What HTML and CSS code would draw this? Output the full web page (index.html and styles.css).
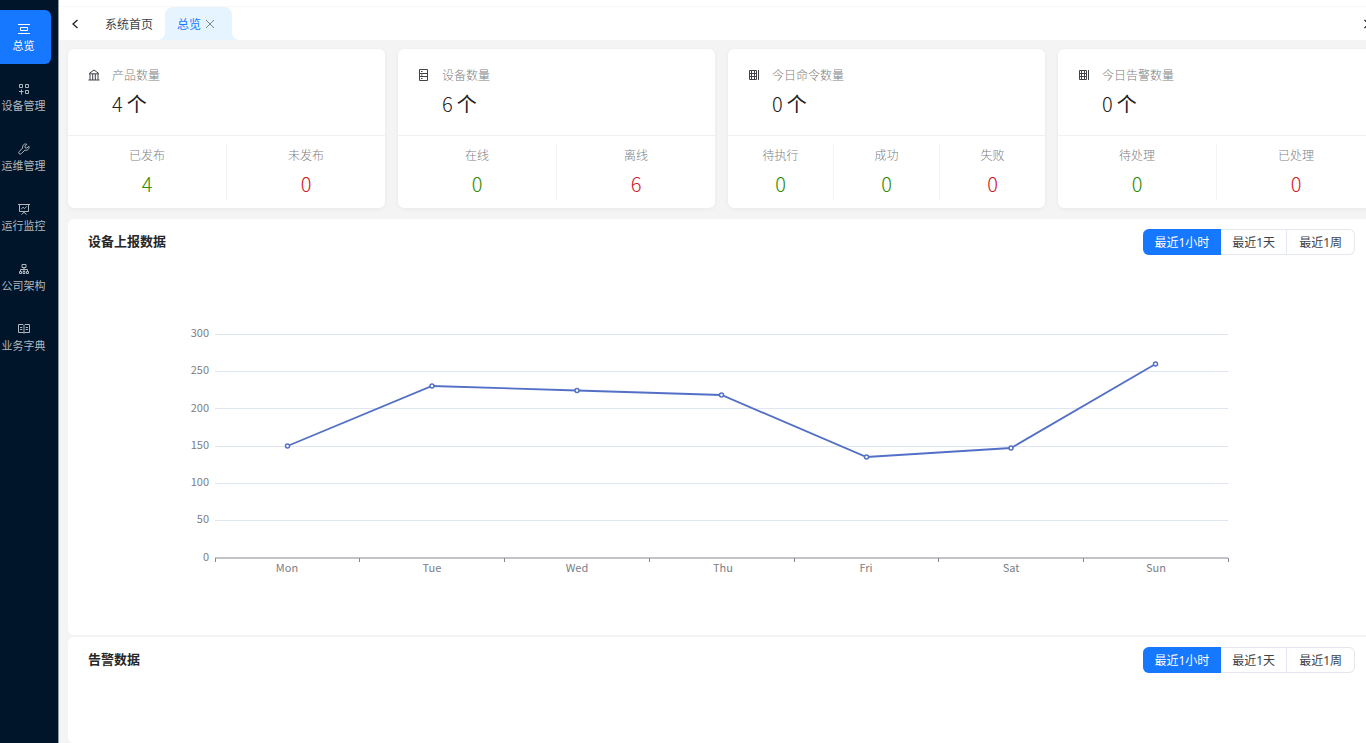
FILE: index.html
```html
<!DOCTYPE html>
<html lang="zh-CN">
<head>
<meta charset="utf-8">
<meta name="viewport" content="width=device-width, initial-scale=1">
<title>总览</title>
<link rel="stylesheet" href="styles.css">
</head>
<body>
<div class="shell">
  <nav class="sidebar">
    <a class="nav-item active" href="#"><svg class="icon" viewBox="0 0 12 12"><path d="M0 1.500h12M0 10.500h12M2.500 4.500h7v3h-7z"/></svg><span>总览</span></a>
    <a class="nav-item" href="#"><svg class="icon" viewBox="0 0 12 12"><path d="M1.500 1.500h3v3h-3zM7.500 1.500h3v3h-3zM7.500 7.500h3v3h-3zM3.500 6.500v5M1 8.500h4.500"/></svg><span>设备管理</span></a>
    <a class="nav-item" href="#"><svg class="icon" viewBox="0 0 12 12"><path d="M10.800 3.200 8.800 5 7.200 4.800 7 3.200 8.800 1.300C7 .4 4.300 1.500 4.600 5L1.200 8.700a1.300 1.300 0 0 0 2 2L6.900 7.200C9.800 7.900 11.700 5.500 10.800 3.200z"/></svg><span>运维管理</span></a>
    <a class="nav-item" href="#"><svg class="icon" viewBox="0 0 12 12"><path d="M0 1.500h12M1.500 1.500v7h9v-7M6 8.300v1M3.500 11.500 6 9.300l2.500 2.200M3.200 6.200l1.800-2 1.500 1.400 2.200-2.300"/></svg><span>运行监控</span></a>
    <a class="nav-item" href="#"><svg class="icon" viewBox="0 0 12 12"><path d="M4 1.500h4v3H4zM6 4.500V8M2.500 8V6.500h7V8M1.500 8.500h2v2h-2zM5 8.500h2v2H5zM8.500 8.500h2v2h-2z"/></svg><span>公司架构</span></a>
    <a class="nav-item" href="#"><svg class="icon" viewBox="0 0 12 12"><path d="M6 2.500v7.500M.5 1.500H5l1 1 1-1h4.500v8H7l-1 .7-1-.7H.5zM2 4.500h2.300M2 6.500h2.300M7.700 4.500H10M7.700 6.500H10"/></svg><span>业务字典</span></a>
  </nav>
  <main class="main">
    <div class="tabbar">
      <button class="arrow" type="button" aria-label="向左"><svg class="icon" viewBox="0 0 12 12"><path d="M8.500 2 4 6l4.500 4"/></svg></button>
      <a class="tab" href="#">系统首页</a>
      <div class="tab current"><a href="#">总览</a><button class="close" type="button" aria-label="关闭"><svg viewBox="0 0 12 12"><path d="m2 2 8 8M10 2l-8 8"/></svg></button></div>
      <button class="arrow next" type="button" aria-label="向右"><svg class="icon" viewBox="0 0 12 12"><path d="m3.500 2 4.500 4-4.500 4"/></svg></button>
    </div>
    <div class="content">
      <div class="cards">
        <section class="card">
          <div class="summary">
            <svg class="icon" viewBox="0 0 12 12"><path d="M.5 11h11M1 4.800h10M1.200 4.500 6 1l4.800 3.500M2 5v6M4.700 5v6M7.300 5v6M10 5v6"/></svg>
            <div><h2>产品数量</h2><p class="value">4<span>个</span></p></div>
          </div>
          <div class="stats">
            <div class="stat"><span>已发布</span><strong class="good">4</strong></div>
            <div class="stat"><span>未发布</span><strong class="bad">0</strong></div>
          </div>
        </section>
        <section class="card">
          <div class="summary">
            <svg class="icon" viewBox="0 0 12 12"><path d="M1.500.5h8v11h-8zM1.500 4.500h8M1.500 7.500h8M3 2.500h1.500M3 6h1.500M3 9.500h1.500"/></svg>
            <div><h2>设备数量</h2><p class="value">6<span>个</span></p></div>
          </div>
          <div class="stats">
            <div class="stat"><span>在线</span><strong class="good">0</strong></div>
            <div class="stat"><span>离线</span><strong class="bad">6</strong></div>
          </div>
        </section>
        <section class="card">
          <div class="summary">
            <svg class="icon" viewBox="0 0 12 12"><path d="M1.500 1.500h7v9h-7zM1.500 4.500h7M1.500 7.500h7M3.500 1.500v9M6.500 1.500v9M10.500 1v10"/></svg>
            <div><h2>今日命令数量</h2><p class="value">0<span>个</span></p></div>
          </div>
          <div class="stats">
            <div class="stat"><span>待执行</span><strong class="good">0</strong></div>
            <div class="stat"><span>成功</span><strong class="good">0</strong></div>
            <div class="stat"><span>失败</span><strong class="bad">0</strong></div>
          </div>
        </section>
        <section class="card">
          <div class="summary">
            <svg class="icon" viewBox="0 0 12 12"><path d="M1.500 1.500h7v9h-7zM1.500 4.500h7M1.500 7.500h7M3.500 1.500v9M6.500 1.500v9M10.500 1v10"/></svg>
            <div><h2>今日告警数量</h2><p class="value">0<span>个</span></p></div>
          </div>
          <div class="stats">
            <div class="stat"><span>待处理</span><strong class="good">0</strong></div>
            <div class="stat"><span>已处理</span><strong class="bad">0</strong></div>
          </div>
        </section>
      </div>
      <section class="panel">
        <header class="panel-head">
          <h2>设备上报数据</h2>
          <div class="ranges"><button class="on" type="button">最近1小时</button><button type="button">最近1天</button><button type="button">最近1周</button></div>
        </header>
        <svg class="chart" viewBox="0 0 1267 360" role="img" aria-label="设备上报数据">
          <path class="grid" d="M127 79.500h1013M127 116.500h1013M127 153.500h1013M127 191.500h1013M127 228.500h1013M127 265.500h1013"/>
          <path class="axis" d="M127 303h1013M127.500 303v4M271.500 303v4M416.500 303v4M561.500 303v4M706.500 303v4M850.500 303v4M995.500 303v4M1140.500 303v4"/>
          <g class="y-labels">
            <text x="121" y="82">300</text><text x="121" y="119">250</text><text x="121" y="157">200</text><text x="121" y="194">150</text><text x="121" y="231">100</text><text x="121" y="268">50</text><text x="121" y="306">0</text>
          </g>
          <g class="x-labels">
            <text x="199" y="317">Mon</text><text x="344" y="317">Tue</text><text x="489" y="317">Wed</text><text x="635" y="317">Thu</text><text x="778" y="317">Fri</text><text x="923" y="317">Sat</text><text x="1068" y="317">Sun</text>
          </g>
          <polyline class="series" points="199.500,191 344,131 489,135.500 633.500,140 778.500,202 923,193 1067.500,109"/>
          <g class="points">
            <circle cx="199.500" cy="191" r="2"/><circle cx="344" cy="131" r="2"/><circle cx="489" cy="135.500" r="2"/><circle cx="633.500" cy="140" r="2"/><circle cx="778.500" cy="202" r="2"/><circle cx="923" cy="193" r="2"/><circle cx="1067.500" cy="109" r="2"/>
          </g>
        </svg>
      </section>
      <section class="panel">
        <header class="panel-head">
          <h2>告警数据</h2>
          <div class="ranges"><button class="on" type="button">最近1小时</button><button type="button">最近1天</button><button type="button">最近1周</button></div>
        </header>
      </section>
    </div>
  </main>
</div>
</body>
</html>
```
FILE: styles.css
```css
* { box-sizing: border-box; }
body, h2, p { margin: 0; }
body, button {
  font-family: "Noto Sans", "Noto Sans CJK SC", sans-serif;
  font-size: 12px;
  color: #404246;
}
a { color: inherit; text-decoration: none; }
button { border: 0; background: none; padding: 0; cursor: pointer; }
.icon {
  width: 12px;
  height: 12px;
  flex: none;
  display: block;
  fill: none;
  stroke: currentColor;
  stroke-width: 1;
}

.shell { display: flex; height: 100vh; overflow: hidden; background: #f4f4f4; }

.sidebar {
  flex: none;
  width: 59px;
  padding: 10px 7px 0 0;
  background: #001529;
  border-right: 1px solid #8f9aa5;
  display: flex;
  flex-direction: column;
  gap: 6px;
}
.nav-item {
  height: 54px;
  display: flex;
  flex-direction: column;
  align-items: center;
  justify-content: center;
  gap: 3px;
  padding: 2px 4px 0 0;
  font-size: 11px;
  line-height: 16px;
  white-space: nowrap;
  color: #b1b8bf;
}
.nav-item.active { background: #1677ff; color: #fff; border-radius: 0 6px 6px 0; }

.main { flex: 1; min-width: 0; display: flex; flex-direction: column; }
.tabbar {
  flex: none;
  height: 40px;
  padding-top: 7px;
  margin-right: -9px;
  display: flex;
  align-items: stretch;
  background: linear-gradient(#f8f8f8, #f8f8f8) 0 6px / 100% 1px no-repeat #fff;
}
.arrow { display: flex; align-items: center; padding: 0 10px; color: #222; }
.arrow .icon { stroke-width: 1.300; }
.next { margin-left: auto; padding: 0 2px; }
.tab { display: flex; align-items: center; padding: 0 12px 0 14px; }
.current {
  position: relative;
  gap: 3px;
  padding: 0 16px 0 12px;
  margin-right: 8px;
  color: #1677ff;
  background: #e6f4ff;
  border-radius: 8px 8px 0 0;
}
.current::before, .current::after {
  content: "";
  position: absolute;
  bottom: 0;
  width: 8px;
  height: 8px;
}
.current::before { right: 100%; background: radial-gradient(circle at 0 0, transparent 8px, #e6f4ff 8px); }
.current::after { left: 100%; background: radial-gradient(circle at 100% 0, transparent 8px, #e6f4ff 8px); }
.close svg { display: block; width: 12px; height: 12px; fill: none; stroke: #7c8289; stroke-width: 1; }

.content {
  flex: 1;
  margin: 9px -9px 0 9px;
  display: flex;
  flex-direction: column;
}
.cards { display: grid; grid-template-columns: repeat(4, 1fr); gap: 13px; margin-bottom: 11px; }
.card { background: #fff; border-radius: 6px; box-shadow: 0 1px 4px #0000000d; }
.summary { display: flex; gap: 12px; padding: 19px 20px 17px; border-bottom: 1px solid #f0f0f0; }
.summary .icon { margin-top: 1px; }
.summary h2 { font-size: 12px; font-weight: 300; line-height: 16px; color: #808080; }
.value, .stat strong {
  font-family: "Noto Sans CJK SC", sans-serif;
  font-size: 20px;
  font-weight: 300;
  line-height: 28px;
}
.value { margin-top: 6px; color: #222; }
.value span { margin-left: 4px; font-weight: 400; }
.stats { display: flex; padding: 8px 0; }
.stat {
  flex: 1;
  height: 56px;
  display: flex;
  flex-direction: column;
  align-items: center;
  gap: 6px;
  padding-top: 4px;
  font-weight: 300;
  line-height: 16px;
  color: #808080;
}
.stat + .stat { border-left: 1px solid #f4f4f4; }
.stat .good { color: #2f8a00; }
.stat .bad { color: #d4152a; }

.panel { background: #fff; border-radius: 6px; padding: 10px 20px 20px; margin-bottom: 2px; }
.panel:last-child { flex: 1; margin-bottom: 0; }
.panel-head { display: flex; align-items: flex-start; justify-content: space-between; height: 26px; }
.panel-head h2 { font-size: 13px; font-weight: 700; line-height: 24px; color: #262626; }
.ranges { display: flex; }
.ranges button { height: 26px; padding: 0 11px; border: 1px solid #e4e7ed; border-left-width: 0; }
.ranges button:last-child { padding: 0 12px; border-radius: 0 6px 6px 0; }
.ranges .on { background: #1677ff; border-color: #1677ff; color: #fff; border-radius: 6px 0 0 6px; }

.chart { display: block; width: 100%; height: auto; }
.grid { stroke: #e0e6f1; fill: none; }
.axis { stroke: #85888f; fill: none; }
.chart text { font-family: "Noto Sans CJK SC", sans-serif; font-size: 11px; fill: #7b7e86; }
.y-labels { text-anchor: end; }
.x-labels { text-anchor: middle; }
.series { fill: none; stroke: #5470c6; stroke-width: 1.800; }
.points { fill: #fff; stroke: #5470c6; stroke-width: 1.500; }
```
